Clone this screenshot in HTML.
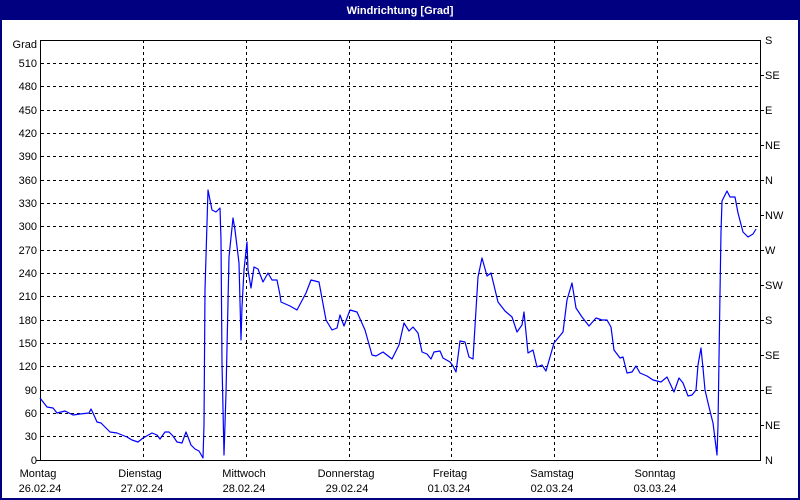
<!DOCTYPE html>
<html><head><meta charset="utf-8"><style>
html,body{margin:0;padding:0;background:#fff}
body{width:800px;height:500px;overflow:hidden}
svg{display:block;font-family:"Liberation Sans",sans-serif;font-size:11px}
</style></head><body>
<svg width="800" height="500" viewBox="0 0 800 500" xmlns="http://www.w3.org/2000/svg">
<rect x="0" y="0" width="800" height="500" fill="#fff"/>
<rect x="1" y="1" width="798" height="498" fill="none" stroke="#000080" stroke-width="2"/>
<rect x="0" y="0" width="800" height="20" fill="#000080"/>
<text x="400" y="14" fill="#fff" font-weight="bold" text-anchor="middle">Windrichtung [Grad]</text>
<g stroke="#000" stroke-width="1" stroke-dasharray="3,3" shape-rendering="crispEdges">
<line x1="41" x2="760" y1="436.5" y2="436.5"/><line x1="41" x2="760" y1="413.5" y2="413.5"/>
<line x1="41" x2="760" y1="390.5" y2="390.5"/><line x1="41" x2="760" y1="366.5" y2="366.5"/>
<line x1="41" x2="760" y1="343.5" y2="343.5"/><line x1="41" x2="760" y1="320.5" y2="320.5"/>
<line x1="41" x2="760" y1="296.5" y2="296.5"/><line x1="41" x2="760" y1="273.5" y2="273.5"/>
<line x1="41" x2="760" y1="250.5" y2="250.5"/><line x1="41" x2="760" y1="226.5" y2="226.5"/>
<line x1="41" x2="760" y1="203.5" y2="203.5"/><line x1="41" x2="760" y1="180.5" y2="180.5"/>
<line x1="41" x2="760" y1="156.5" y2="156.5"/><line x1="41" x2="760" y1="133.5" y2="133.5"/>
<line x1="41" x2="760" y1="110.5" y2="110.5"/><line x1="41" x2="760" y1="86.5" y2="86.5"/>
<line x1="41" x2="760" y1="63.5" y2="63.5"/>
<line x1="143.5" x2="143.5" y1="40" y2="460"/><line x1="246.5" x2="246.5" y1="40" y2="460"/>
<line x1="349.5" x2="349.5" y1="40" y2="460"/><line x1="451.5" x2="451.5" y1="40" y2="460"/>
<line x1="554.5" x2="554.5" y1="40" y2="460"/><line x1="657.5" x2="657.5" y1="40" y2="460"/>
</g>
<g stroke="#000" stroke-width="1" fill="none" shape-rendering="crispEdges">
<polyline points="40.5,460 40.5,40.5 760.5,40.5 760.5,460.5 40,460.5"/>
<line x1="36" x2="40" y1="460.5" y2="460.5"/>
<line x1="761" x2="764" y1="425.5" y2="425.5"/><line x1="761" x2="764" y1="390.5" y2="390.5"/>
<line x1="761" x2="764" y1="355.5" y2="355.5"/><line x1="761" x2="764" y1="320.5" y2="320.5"/>
<line x1="761" x2="764" y1="285.5" y2="285.5"/><line x1="761" x2="764" y1="250.5" y2="250.5"/>
<line x1="761" x2="764" y1="215.5" y2="215.5"/><line x1="761" x2="764" y1="180.5" y2="180.5"/>
<line x1="761" x2="764" y1="145.5" y2="145.5"/><line x1="761" x2="764" y1="110.5" y2="110.5"/>
<line x1="761" x2="764" y1="75.5" y2="75.5"/>
</g>
<g fill="#000" text-anchor="end">
<text x="37" y="48">Grad</text>
<text x="37" y="67">510</text><text x="37" y="90">480</text><text x="37" y="114">450</text>
<text x="37" y="137">420</text><text x="37" y="160">390</text><text x="37" y="184">360</text>
<text x="37" y="207">330</text><text x="37" y="230">300</text><text x="37" y="254">270</text>
<text x="37" y="277">240</text><text x="37" y="300">210</text><text x="37" y="324">180</text>
<text x="37" y="347">150</text><text x="37" y="370">120</text><text x="37" y="394">90</text>
<text x="37" y="417">60</text><text x="37" y="440">30</text><text x="37" y="464">0</text>
</g>
<g fill="#000">
<text x="765" y="464">N</text><text x="765" y="429">NE</text><text x="765" y="394">E</text>
<text x="765" y="359">SE</text><text x="765" y="324">S</text><text x="765" y="289">SW</text>
<text x="765" y="254">W</text><text x="765" y="219">NW</text><text x="765" y="184">N</text>
<text x="765" y="149">NE</text><text x="765" y="114">E</text><text x="765" y="79">SE</text>
<text x="765" y="44">S</text>
</g>
<g fill="#000" text-anchor="middle">
<text x="38" y="477">Montag</text><text x="40" y="492">26.02.24</text>
<text x="140" y="477">Dienstag</text><text x="142" y="492">27.02.24</text>
<text x="244" y="477">Mittwoch</text><text x="244" y="492">28.02.24</text>
<text x="346" y="477">Donnerstag</text><text x="347" y="492">29.02.24</text>
<text x="450" y="477">Freitag</text><text x="449" y="492">01.03.24</text>
<text x="552" y="477">Samstag</text><text x="552" y="492">02.03.24</text>
<text x="655" y="477">Sonntag</text><text x="655" y="492">03.03.24</text>
</g>
<polyline fill="none" stroke="#0000ff" stroke-width="1.2" stroke-linejoin="round" points="
40,398 47,407 53,408 57,413 65,411 73,415 80,414 89,413 91,409 93,413 97,422 101,423 107,429 110,432 117,433 127,437 132,440 138,442 143,438 152,433 157,435 160,439 165,432 169,432 173,436 177,442 182,443 186,432 188,437 191,445 195,449 199,451 203,458 204,425 205,290 207,223 208,190 212,210 216,212 220,208 221,240 222,363 224,455 226,393 229,257 233,218 235,230 239,263 241,340 242,307 244,270 247,242 248,270 251,288 254,267 258,269 263,282 268,273 272,280 277,280 280,295
281,302 290,306 297,310 306,293 311,280 319,282 326,320 332,330 337,328 340,315 344,326 350,310 357,312 365,330 372,355 376,356 383,352 392,359 399,345 404,323 409,331 413,327 418,333 422,352 427,354 431,359 434,352 440,351 443,358 450,362 453,366 456,372 460,341 465,342 469,357 473,359 478,277 482,258 487,276 491,273 498,302 505,311 512,317 517,332 522,325 524,312
528,353 533,350 537,367 542,365 546,371 554,343 563,332 567,300 572,283 576,308 582,317 589,326 596,318 602,320 607,320 611,327 614,350 620,358 623,357 627,373 632,372 636,366 640,373 647,376 653,380 661,382 667,377 674,392 679,378 683,383 688,396 692,395 696,390 698,365 701,348 703,368 705,390 709,407 713,423 717,455 718,425 720,293 721,232 722,201 727,191 730,197 735,197 738,213 743,232 748,237 753,234 756,229"/>
</svg>
</body></html>
